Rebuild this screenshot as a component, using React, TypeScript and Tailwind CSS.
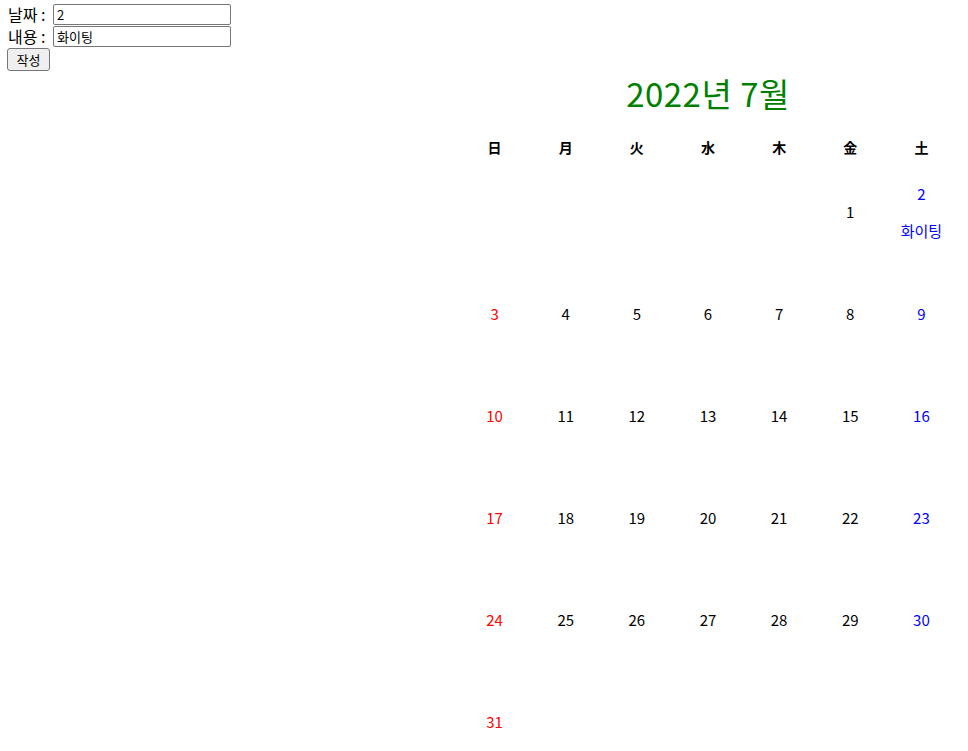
import { useState } from "react";

const WEEK = ["日", "月", "火", "水", "木", "金", "土"];

function dayColor(col: number) {
  if (col === 0) return "text-[#ff0000]";
  if (col === 6) return "text-[#0000ff]";
  return "text-black";
}

export default function App() {
  const [date, setDate] = useState("2");
  const [text, setText] = useState("화이팅");
  const [memo] = useState<Record<number, string>>({ 2: "화이팅" });

  // July 2022 starts on a Friday
  const first = 5;
  const cells: (number | null)[] = [];
  for (let i = 0; i < first; i++) cells.push(null);
  for (let d = 1; d <= 31; d++) cells.push(d);
  while (cells.length % 7 !== 0) cells.push(null);
  const rows: (number | null)[][] = [];
  for (let i = 0; i < cells.length; i += 7) rows.push(cells.slice(i, i + 7));

  return (
    <div className="min-h-[751px] bg-white font-['Noto_Sans_CJK_KR','Noto_Sans',sans-serif] text-[16px] text-black">
      <div className="flex h-[71px] flex-col items-start pl-[8px] pt-[4px]">
        <div className="flex h-[22px] items-start">
          <span className="w-[45px] leading-[21px]">날짜 :</span>
          <input
            value={date}
            onChange={(e) => setDate(e.target.value)}
            className="h-[21px] w-[178px] rounded-[2px] border border-[#767676] px-[3px] text-[13px] leading-none outline-none"
          />
        </div>
        <div className="flex h-[22px] items-start">
          <span className="w-[45px] leading-[21px]">내용 :</span>
          <input
            value={text}
            onChange={(e) => setText(e.target.value)}
            className="h-[21px] w-[178px] rounded-[2px] border border-[#767676] px-[3px] text-[13px] leading-none outline-none"
          />
        </div>
        <button className="-ml-[1px] block h-[23px] w-[43px] rounded-[3px] border border-[#767676] bg-[#efefef] text-[13px] leading-none">
          작성
        </button>
      </div>

      <div className="ml-[459px] w-[498px]">
        <div className="h-[48px] text-center text-[33px] leading-[44px] tracking-[0.5px] text-[#008000]">2022년 7월</div>
        <div className="mt-[16px] grid h-[26px] grid-cols-7 items-start text-center text-[14px] font-bold leading-[24px]">
          {WEEK.map((w) => (
            <div key={w}>{w}</div>
          ))}
        </div>
        {rows.map((row, ri) => (
          <div key={ri} className="grid h-[102px] grid-cols-7 text-center text-[15px]">
            {row.map((d, ci) => (
              <div key={ci} className={`flex flex-col items-center justify-center gap-[13px] ${dayColor(ci)}`}>
                {d !== null && <div className="leading-[24px]">{d}</div>}
                {d !== null && memo[d] && <div className="leading-[24px]">{memo[d]}</div>}
              </div>
            ))}
          </div>
        ))}
      </div>
    </div>
  );
}
